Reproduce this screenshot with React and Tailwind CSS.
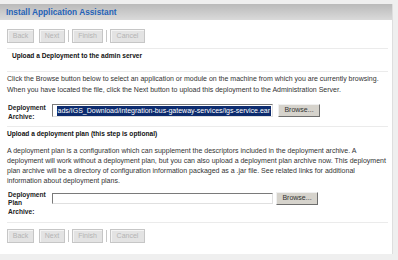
import React from "react";

const font = { fontFamily: '"Liberation Sans", Arial, sans-serif' };

function Btn({ children, w }) {
  return (
    <div
      className={`h-[14px] ${w} flex items-center justify-center border border-[#c6c6c6] bg-[#e3e3e3] text-[7px] text-[#b4b4b4] shadow-[inset_1px_1px_0_#f4f4f4]`}
    >
      {children}
    </div>
  );
}

function Sep() {
  return <div className="w-px h-[12px] bg-[#c8c8c8] mx-[3px]" />;
}

function Buttons() {
  return (
    <div className="flex items-center pl-[7px] h-[14px]">
      <Btn w="w-[27px]">Back</Btn>
      <div className="w-[5px]" />
      <Btn w="w-[26px]">Next</Btn>
      <Sep />
      <Btn w="w-[31px]">Finish</Btn>
      <Sep />
      <Btn w="w-[35px]">Cancel</Btn>
    </div>
  );
}

function Line() {
  return <div className="ml-[7px] w-[381px] h-px bg-[#ebebeb]" />;
}

function Browse() {
  return (
    <div className="h-[13px] w-[42px] flex items-center justify-center bg-[#d6d3cc] border border-[#f0f0f0] border-r-[#6e6e6e] border-b-[#6e6e6e] text-[7px] text-[#333]">
      Browse...
    </div>
  );
}

export default function App() {
  return (
    <div className="w-[398px] h-[260px] bg-[#efefef] pt-[4px]" style={font}>
      <div className="w-[393px] h-[250px] bg-white border-r border-[#dedede]">
        <div className="h-[16px] bg-gradient-to-b from-[#bababa] to-[#dadada] flex items-center pl-[6px]">
          <span className="text-[8.3px] font-bold text-[#2563b8] leading-none">
            Install Application Assistant
          </span>
        </div>
        <div className="pt-[9px]">
          <Buttons />
        </div>
        <div className="h-[5px]" />
        <Line />
        <div className="pl-[12px] pt-[2px] h-[22px] text-[6.6px] font-bold text-[#111] leading-[10px]">
          Upload a Deployment to the admin server
        </div>
        <Line />
        <div className="pl-[7px] pt-[2px] text-[7px] text-[#333] leading-[10.5px] whitespace-nowrap">
          Click the Browse button below to select an application or module on the machine from which you are currently browsing.
          <br />
          When you have located the file, click the Next button to upload this deployment to the Administration Server.
        </div>
        <div className="flex items-start pt-[9px] h-[31px]">
          <div className="pl-[8px] w-[52px] text-[6.6px] font-bold text-[#222] leading-[8.5px]">
            Deployment
            <br />
            Archive:
          </div>
          <div className="w-[221px] h-[13px] border border-[#7a7a7a] border-r-[#e0e0e0] border-b-[#e0e0e0] overflow-hidden flex items-center justify-end pr-px whitespace-nowrap">
            <span className="bg-[#0c2b6e] text-white text-[7px] leading-[10px] px-px">
              ads/IGS_Download/integration-bus-gateway-services/igs-service.ear
            </span>
          </div>
          <div className="w-[5px]" />
          <Browse />
        </div>
        <Line />
        <div className="pl-[7px] pt-[2px] h-[19px] text-[6.6px] font-bold text-[#111] leading-[10px]">
          Upload a deployment plan (this step is optional)
        </div>
        <div className="pl-[7px] text-[7px] text-[#333] leading-[10px] whitespace-nowrap">
          A deployment plan is a configuration which can supplement the descriptors included in the deployment archive. A
          <br />
          deployment will work without a deployment plan, but you can also upload a deployment plan archive now. This deployment
          <br />
          plan archive will be a directory of configuration information packaged as a .jar file. See related links for additional
          <br />
          information about deployment plans.
        </div>
        <div className="flex items-start pt-[5px] h-[36px]">
          <div className="pl-[8px] w-[52px] text-[6.6px] font-bold text-[#222] leading-[8.3px]">
            Deployment
            <br />
            Plan
            <br />
            Archive:
          </div>
          <div className="mt-[2px] w-[221px] h-[11px] border border-[#7a7a7a] border-r-[#e0e0e0] border-b-[#e0e0e0] bg-white" />
          <div className="w-[3px]" />
          <div className="mt-[1px]">
            <Browse />
          </div>
        </div>
        <Line />
        <div className="pt-[6px]">
          <Buttons />
        </div>
      </div>
    </div>
  );
}
